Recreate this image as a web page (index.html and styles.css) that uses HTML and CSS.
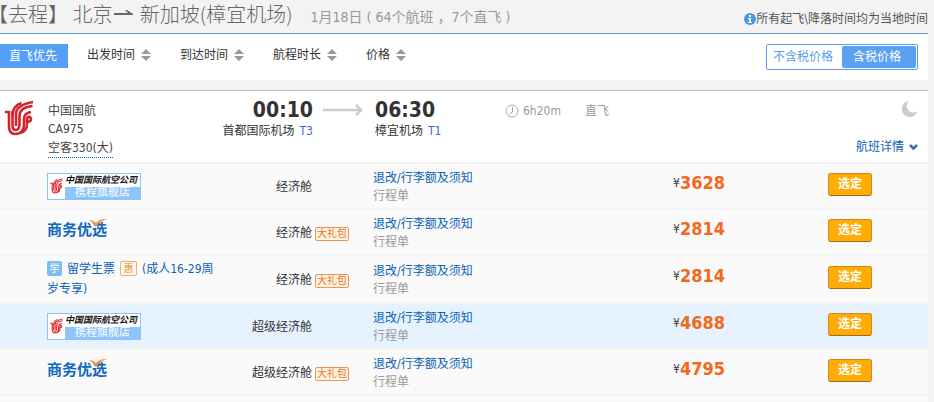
FILE: index.html
```html
<!doctype html>

<html lang="zh-CN">
<head>
  <meta charset="utf-8">
  <meta name="viewport" content="width=device-width, initial-scale=1.0">
  <title>北京 - 新加坡 航班</title>
  <link rel="stylesheet" href="styles.css">
</head>
<body>

<!-- shared shapes -->
<svg class="defs" width="0" height="0" aria-hidden="true">
  <symbol id="phoenix" viewBox="0 0 30 36">
    <g fill="none" stroke="currentColor" stroke-width="2.600">
      <path d="M1 12h4v14c0 5 2 8 6 8c6 0 9-4 9-10v-5c0-4 2-6 7-7"/>
      <path d="M8.500 11v14c0 3 1 5 3 5c3 0 4-2 4-6v-8c0-6 4-9 13-10"/>
      <path d="M12 26V14c0-6 6-10 17-12"/>
      <path d="M8.500 16c0-7 3-11 9-13"/>
      <path d="M22 22c4 0 5-1 5-3c0-3-4-3-4 1v4c0 5-3 8-7 9"/>
    </g>
  </symbol>
  <symbol id="sort" viewBox="0 0 10 12">
    <path fill="#999" d="M5 0l5 5H0zM0 7h10l-5 5z"/>
  </symbol>
  <symbol id="tick" viewBox="0 0 20 9">
    <path fill="#f59331" d="M2 1c3 0 5 1 7 3c3-3 5-4 11-4c-6 2-8 4-11 8C7 5 5 3 2 1z"/>
  </symbol>
</svg>

<main class="page">
  <header class="route">
    <h1>【去程】 北京<svg class="to" width="19" height="8" viewBox="0 0 19 8" role="img" aria-label="到"><path fill="#666" d="M0 4h14l-3-3h2l6 4v1H0z"/></svg> 新加坡(樟宜机场)</h1>
    <span class="summary">1月18日 ( 64个航班 ，7个直飞 )</span>
    <span class="note"><svg width="12" height="12" viewBox="0 0 12 12"><circle cx="6" cy="6" r="6" fill="#4a98e8"/><path fill="#fff" d="M5 2h2v2H5zM4 5h3v4h1v1H4V9h1V6H4z"/></svg>所有起飞\降落时间均为当地时间</span>
  </header>

  <div class="filters">
    <button class="direct">直飞优先</button>
    <button class="sort">出发时间<svg><use href="#sort"/></svg></button>
    <button class="sort">到达时间<svg><use href="#sort"/></svg></button>
    <button class="sort">航程时长<svg><use href="#sort"/></svg></button>
    <button class="sort">价格<svg><use href="#sort"/></svg></button>
    <div class="tax">
      <button>不含税价格</button>
      <button class="on">含税价格</button>
    </div>
  </div>

  <section class="flight">
    <div class="info">
      <svg class="airline-logo"><use href="#phoenix"/></svg>
      <div class="airline">
        <div>中国国航</div>
        <div>CA975</div>
        <div class="plane"><span>空客330(大)</span></div>
      </div>
      <div class="depart">
        <strong>00:10</strong>
        <div>首都国际机场<span class="terminal">T3</span></div>
      </div>
      <svg class="arrow" width="40" height="12" viewBox="0 0 40 12"><path d="M0 6h38M33 1l5 5-5 5" fill="none" stroke="#ccc" stroke-width="2.500"/></svg>
      <div class="arrive">
        <strong>06:30</strong>
        <div>樟宜机场<span class="terminal">T1</span></div>
      </div>
      <div class="duration"><svg width="14" height="14" viewBox="0 0 14 14"><g fill="none" stroke="#aaa"><circle cx="7" cy="7" r="6"/><path d="M7.500 3v5l-3 2"/></g></svg>6h20m</div>
      <div class="stops">直飞</div>
      <div class="more">
        <svg width="16" height="16" viewBox="0 0 16 16"><path fill="#ccc" d="M7 0a8 8 0 1 0 8.500 10A6.500 6.500 0 0 1 7 0z"/></svg>
        <a href="#">航班详情<svg width="9" height="7" viewBox="0 0 9 7"><path d="M1 1l3.500 3.500L8 1" fill="none" stroke="#2f6db5" stroke-width="2.500"/></svg></a>
      </div>
    </div>

    <table class="fares">
      <colgroup>
        <col class="c-name"><col class="c-cabin"><col class="c-gift"><col><col class="c-price"><col class="c-pick">
      </colgroup>
      <tr>
        <td class="name"><div class="flagship"><svg><use href="#phoenix"/></svg><b>中国国际航空公司</b><span>携程旗舰店</span></div></td>
        <td class="cabin">经济舱</td>
        <td></td>
        <td><a href="#">退改/行李额及须知</a><div class="receipt">行程单</div></td>
        <td class="price"><small>¥</small>3628</td>
        <td class="pick"><button>选定</button></td>
      </tr>
      <tr>
        <td class="name"><div class="business">商务优选<svg><use href="#tick"/></svg></div></td>
        <td class="cabin">经济舱</td>
        <td><span class="gift">大礼包</span></td>
        <td><a href="#">退改/行李额及须知</a><div class="receipt">行程单</div></td>
        <td class="price"><small>¥</small>2814</td>
        <td class="pick"><button>选定</button></td>
      </tr>
      <tr>
        <td class="name"><a class="student" href="#"><i class="xue">学</i>留学生票<i class="hui">惠</i>(成人16-29周岁专享)</a></td>
        <td class="cabin">经济舱</td>
        <td><span class="gift">大礼包</span></td>
        <td><a href="#">退改/行李额及须知</a><div class="receipt">行程单</div></td>
        <td class="price"><small>¥</small>2814</td>
        <td class="pick"><button>选定</button></td>
      </tr>
      <tr class="hover">
        <td class="name"><div class="flagship"><svg><use href="#phoenix"/></svg><b>中国国际航空公司</b><span>携程旗舰店</span></div></td>
        <td class="cabin">超级经济舱</td>
        <td></td>
        <td><a href="#">退改/行李额及须知</a><div class="receipt">行程单</div></td>
        <td class="price"><small>¥</small>4688</td>
        <td class="pick"><button>选定</button></td>
      </tr>
      <tr>
        <td class="name"><div class="business">商务优选<svg><use href="#tick"/></svg></div></td>
        <td class="cabin">超级经济舱</td>
        <td><span class="gift">大礼包</span></td>
        <td><a href="#">退改/行李额及须知</a><div class="receipt">行程单</div></td>
        <td class="price"><small>¥</small>4795</td>
        <td class="pick"><button>选定</button></td>
      </tr>
    </table>
  </section>
</main>

</body>
</html>
```
FILE: styles.css
```css
* {
  box-sizing: border-box;
}

body {
  margin: 0;
  background: #f3f3f3;
  color: #333;
  font: 12px/18px "DejaVu Sans Condensed", "Noto Sans CJK SC", sans-serif;
}

button {
  margin: 0;
  padding: 0;
  border: 0;
  background: none;
  color: inherit;
  font: inherit;
  cursor: pointer;
}

a {
  color: #0a62b5;
  text-decoration: none;
}

.defs {
  display: block;
}

.page {
  display: flex;
  flex-direction: column;
  min-height: 100vh;
  padding-right: 6px;
  overflow: hidden;
}

/* route title */

.route {
  display: flex;
  align-items: center;
  height: 34px;
  border-bottom: 1px solid #5b9cd8;
  white-space: nowrap;
}

.route h1 {
  margin: 0 0 6px -12px;
  color: #666;
  font: 300 20px/28px "Noto Sans CJK SC", sans-serif;
}

.to {
  margin: 0 2px;
  vertical-align: 5px;
}

.summary {
  margin-left: 18px;
  color: #999;
  font-size: 14px;
}

.note {
  display: flex;
  align-items: center;
  margin: 5px 0 0 auto;
  color: #555;
}

/* filters */

.filters {
  display: flex;
  padding: 10px 10px 10px 0;
  background: #fff;
}

.direct {
  width: 68px;
  height: 24px;
  padding-right: 2px;
  background: #559ff7;
  color: #fff;
}

.sort {
  display: flex;
  align-items: center;
  gap: 6px;
  height: 22px;
  margin-right: 29px;
}

.direct + .sort {
  margin-left: 19px;
}

.sort svg {
  width: 10px;
  height: 12px;
}

.tax {
  display: flex;
  height: 26px;
  margin-left: auto;
  padding: 1px;
  border: 1px solid #5b9ce8;
  border-radius: 2px;
  background: #fff;
  color: #5b9ce8;
}

.tax button {
  width: 74px;
  padding-right: 4px;
}

.tax .on {
  border-radius: 2px;
  background: #5ba1f1;
  color: #fff;
}

/* flight */

.flight {
  flex: 1;
  margin-top: 10px;
  border-top: 1px solid #bbb;
  background: #fafafa;
}

.info {
  display: grid;
  grid-template-columns: 48px 165px 100px 62px 130px 80px 40px 1fr;
  height: 73px;
  padding: 9px 10px 0 0;
  border-bottom: 2px solid #f2f2f2;
  background: #fff;
}

.airline-logo {
  width: 30px;
  height: 36px;
  margin-left: 4px;
  color: #d2232f;
}

.airline {
  padding-top: 2px;
  color: #444;
}

.plane span {
  display: inline-block;
  margin-top: 2px;
  line-height: 17px;
  border-bottom: 1px dotted #0a62b5;
}

.depart {
  text-align: right;
}

.depart strong,
.arrive strong {
  display: block;
  font-size: 21px;
  line-height: 20px;
  margin-bottom: 2px;
}

.terminal {
  margin-left: 5px;
  color: #4169d0;
}

.arrow {
  margin: 4px 0 0 10px;
}

.duration,
.stops {
  display: flex;
  align-items: center;
  gap: 4px;
  height: 22px;
  color: #999;
}

.more {
  display: flex;
  flex-direction: column;
  align-items: flex-end;
  gap: 21px;
  padding-top: 1px;
}

.more a {
  display: flex;
  align-items: center;
  gap: 5px;
}

/* fares */

.fares {
  width: 100%;
  table-layout: fixed;
  border-spacing: 0;
}

.c-name {
  width: 217px;
}

.c-cabin {
  width: 95px;
}

.c-gift {
  width: 61px;
}

.c-price {
  width: 155px;
}

.c-pick {
  width: 100px;
}

.fares td {
  height: 46px;
  padding: 1px 0 0;
  border-bottom: 2px solid #f2f2f2;
}

.fares .hover td {
  background: #e6f3ff;
}

.fares .name {
  padding: 3px 0 3px 47px;
}

.fares .cabin {
  text-align: right;
}

.receipt {
  color: #999;
}

.fares .price {
  padding-bottom: 8px;
  color: #f2691b;
  font-size: 18px;
  font-weight: bold;
}

.price small {
  color: #444;
  font-size: 12px;
  font-weight: normal;
  vertical-align: 2px;
}

.fares .pick {
  padding-bottom: 5px;
}

.pick button {
  display: block;
  width: 44px;
  height: 23px;
  border: 1px solid #d08a1c;
  border-bottom-color: #a8691c;
  border-radius: 3px;
  background: #ffad06;
  color: #fff;
  font-weight: bold;
}

.gift {
  display: inline-block;
  margin-left: 3px;
  border: 1px solid #f0954f;
  border-radius: 2px;
  background: #fff3e2;
  color: #e8741f;
  font-size: 10px;
  line-height: 12px;
  padding: 0 1px;
}

.flagship {
  display: grid;
  grid-template-columns: 17px 75px;
  grid-template-rows: 13px 12px;
  width: 94px;
  border: 1px solid #8fc4f2;
  background: #fff;
}

.flagship svg {
  grid-row: 1 / 3;
  align-self: center;
  width: 13px;
  height: 16px;
  margin-left: 2px;
  color: #e0262c;
}

.flagship b {
  color: #111;
  font-size: 9px;
  font-style: italic;
  line-height: 13px;
  white-space: nowrap;
}

.flagship span {
  background: #8cc4fb;
  color: #fff;
  font-size: 11px;
  line-height: 12px;
  text-align: center;
}

.business {
  position: relative;
  width: 60px;
  margin-bottom: 4px;
  color: #0f68c0;
  font-size: 15px;
  font-weight: bold;
  white-space: nowrap;
}

/* tick over the last two characters */
.business svg {
  position: absolute;
  top: -2px;
  right: 0;
  width: 20px;
  height: 9px;
}

.student {
  display: block;
  line-height: 20px;
}

.student i {
  display: inline-block;
  width: 15px;
  height: 15px;
  border-radius: 2px;
  font-size: 10px;
  font-style: normal;
  line-height: 15px;
  text-align: center;
  vertical-align: 1px;
}

.student .xue {
  margin-right: 5px;
  background: #7dbdf0;
  color: #fff;
}

.student .hui {
  width: 17px;
  margin: 0 5px;
  border: 1px solid #f0b060;
  color: #e8922c;
  line-height: 13px;
}
```
